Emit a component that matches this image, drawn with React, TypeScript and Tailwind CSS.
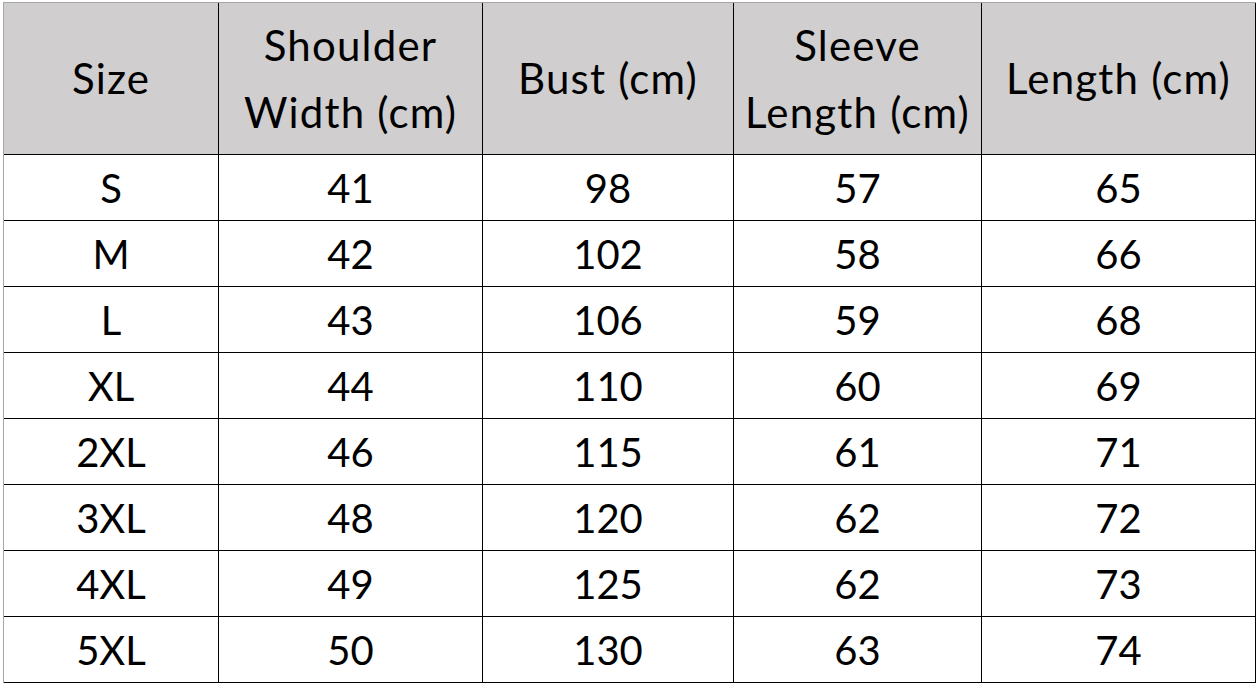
import React from "react";

const headers: string[][] = [
  ["Size"],
  ["Shoulder", "Width (cm)"],
  ["Bust (cm)"],
  ["Sleeve", "Length (cm)"],
  ["Length (cm)"],
];

const rows: string[][] = [
  ["S", "41", "98", "57", "65"],
  ["M", "42", "102", "58", "66"],
  ["L", "43", "106", "59", "68"],
  ["XL", "44", "110", "60", "69"],
  ["2XL", "46", "115", "61", "71"],
  ["3XL", "48", "120", "62", "72"],
  ["4XL", "49", "125", "62", "73"],
  ["5XL", "50", "130", "63", "74"],
];

export default function App() {
  return (
    <div
      className="w-[1259px] h-[686px] bg-white pt-[2px] pl-[3px] overflow-hidden"
      style={{ fontFamily: "Lato, 'Open Sans', sans-serif" }}
    >
      <div className="grid w-[1253px] grid-cols-[215px_264px_251px_248px_274px] border-l border-t border-l-[#a6a6a6] border-t-[#a6a6a6] text-black">
        {headers.map((h, i) => (
          <div
            key={"h" + i}
            className="h-[152px] bg-[#d0cece] border-r border-b border-black flex flex-col items-center justify-center text-[42px] tracking-[1.2px] leading-[67px]"
          >
            {h.map((line) => (
              <span key={line}>{line}</span>
            ))}
          </div>
        ))}
        {rows.map((r, ri) =>
          r.map((c, ci) => (
            <div
              key={ri + "-" + ci}
              className="h-[66px] border-r border-b border-black flex items-center justify-center text-[40px] leading-none"
            >
              {c}
            </div>
          ))
        )}
      </div>
    </div>
  );
}
